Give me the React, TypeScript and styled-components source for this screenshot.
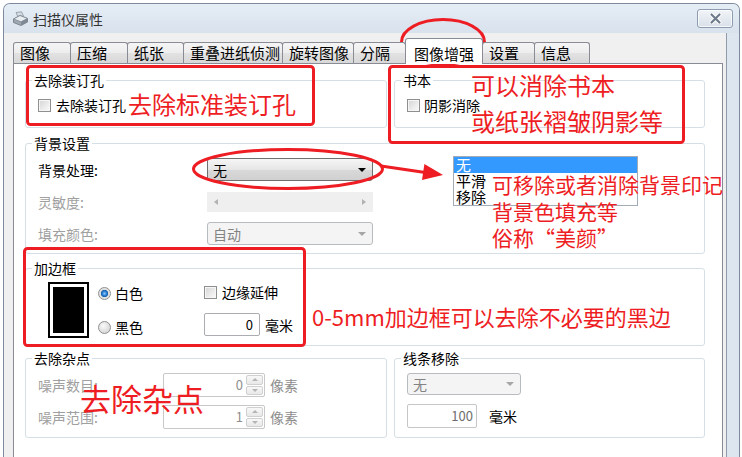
import React from 'react';
import styled, { createGlobalStyle } from 'styled-components';

const RED = '#ee1d23';
const FONT = '"Noto Sans CJK SC", "Noto Sans", sans-serif';

const tabs = [
  { label: '图像', w: 58 },
  { label: '压缩', w: 58 },
  { label: '纸张', w: 57 },
  { label: '重叠进纸侦测', w: 100 },
  { label: '旋转图像', w: 72 },
  { label: '分隔', w: 53 },
  { label: '图像增强', w: 78, active: true },
  { label: '设置', w: 53 },
  { label: '信息', w: 56 },
];

const Spinner = ({ value }: { value: string }) => (
  <SpinBox>
    <SpinValue>{value}</SpinValue>
    <SpinButtons>
      <SpinButton>
        <SpinArrow $up />
      </SpinButton>
      <SpinButton>
        <SpinArrow />
      </SpinButton>
    </SpinButtons>
  </SpinBox>
);

const App = () => (
  <>
    <GlobalStyle />
    <Page>
      <Window>
        <TitleBar>
          <svg width="17" height="16" viewBox="0 0 17 16">
            <path d="M4 1.5 L9.5 0.8 L11.5 5 L6 6 Z" fill="#d3dbe3" stroke="#8a949e" strokeWidth="0.8" />
            <path d="M1.5 8 L8 4.5 L15.5 7.5 L15.5 11 L9 14.5 L1.5 11.5 Z" fill="#9fa9b4" stroke="#6b7580" strokeWidth="0.8" />
            <path d="M1.5 8 L8 4.5 L15.5 7.5 L9 10.8 Z" fill="#e8edf2" stroke="#7d8791" strokeWidth="0.8" />
            <path d="M9 10.8 L15.5 7.5 L15.5 11 L9 14.5 Z" fill="#7f8a96" />
          </svg>
          <Title>扫描仪属性</Title>
          <CloseButton>
            <svg width="13" height="11" viewBox="0 0 13 11">
              <path d="M2.5 1.5 L10.5 9.5 M10.5 1.5 L2.5 9.5" stroke="#ffffff" strokeWidth="4" strokeLinecap="round" />
              <path d="M2.5 1.5 L10.5 9.5 M10.5 1.5 L2.5 9.5" stroke="#6f7b8b" strokeWidth="2.2" strokeLinecap="round" />
            </svg>
          </CloseButton>
        </TitleBar>
        <Client>
          <TabStrip>
            {tabs.map(t => (
              <Tab key={t.label} $w={t.w} $active={t.active}>
                {t.label}
              </Tab>
            ))}
          </TabStrip>
          <Panel>
            <Row>
              <Group $h={56}>
                <Legend>去除装订孔</Legend>
                <CheckRow $pt={6}>
                  <CheckBox />
                  <Label $gap={5}>去除装订孔</Label>
                </CheckRow>
              </Group>
              <Group $h={56}>
                <Legend>书本</Legend>
                <CheckRow $pt={6}>
                  <CheckBox />
                  <Label $gap={4}>阴影消除</Label>
                </CheckRow>
              </Group>
            </Row>

            <Group $h={119} $mt={7}>
              <Legend>背景设置</Legend>
              <FieldGrid $cols="169px 166px" $rowH={23} $rowGap={9}>
                <FieldLabel>背景处理:</FieldLabel>
                <Combo>
                  <span>无</span>
                  <DropArrow />
                </Combo>
                <FieldLabel $dim>灵敏度:</FieldLabel>
                <Track>
                  <TrackArrow $dir="left" />
                  <TrackArrow $dir="right" />
                </Track>
                <FieldLabel $dim>填充颜色:</FieldLabel>
                <Combo $disabled>
                  <span>自动</span>
                  <DropArrow $disabled />
                </Combo>
              </FieldGrid>
            </Group>

            <Group $h={86} $mt={6}>
              <Legend>加边框</Legend>
              <BorderRow>
                <FramePreview />
                <RadioCol>
                  <RadioRow>
                    <Radio $checked />
                    <Label $gap={4}>白色</Label>
                  </RadioRow>
                  <RadioRow>
                    <Radio />
                    <Label $gap={4}>黑色</Label>
                  </RadioRow>
                </RadioCol>
                <OptionCol>
                  <CheckRow $pt={0}>
                    <CheckBox />
                    <Label $gap={5}>边缘延伸</Label>
                  </CheckRow>
                  <InlineRow>
                    <NumberBox $w={56} $h={23}>
                      0
                    </NumberBox>
                    <Unit $gap={5}>毫米</Unit>
                  </InlineRow>
                </OptionCol>
              </BorderRow>
            </Group>

            <Row $mt={4}>
              <Group $h={88}>
                <Legend>去除杂点</Legend>
                <FieldGrid $cols="125px 102px auto" $rowH={24} $rowGap={8}>
                  <FieldLabel $dim>噪声数目:</FieldLabel>
                  <Spinner value="0" />
                  <Unit $dim $gap={5}>
                    像素
                  </Unit>
                  <FieldLabel $dim>噪声范围:</FieldLabel>
                  <Spinner value="1" />
                  <Unit $dim $gap={5}>
                    像素
                  </Unit>
                </FieldGrid>
              </Group>
              <Group $h={88}>
                <Legend>线条移除</Legend>
                <Stack>
                  <Combo $disabled $w={114} $h={22}>
                    <span>无</span>
                    <DropArrow $disabled />
                  </Combo>
                  <InlineRow>
                    <NumberBox $w={70} $h={24} $dim>
                      100
                    </NumberBox>
                    <Unit $gap={12}>毫米</Unit>
                  </InlineRow>
                </Stack>
              </Group>
            </Row>
          </Panel>
        </Client>
      </Window>

      {/* red markup drawn over the screenshot */}
      <PopupList>
        <PopupItem $selected>无</PopupItem>
        <PopupItem>平滑</PopupItem>
        <PopupItem>移除</PopupItem>
      </PopupList>
      <Marks width="742" height="457" viewBox="0 0 742 457">
        <rect x="27.5" y="66.5" width="286" height="58" rx="3" />
        <rect x="389.5" y="66.5" width="294" height="76" rx="3" />
        <rect x="24.5" y="248.5" width="280" height="97" rx="3" />
        <ellipse cx="443" cy="42" rx="41.5" ry="22.5" />
        <ellipse cx="288" cy="169" rx="94.5" ry="19.5" />
        <line x1="381" y1="166" x2="427" y2="172.8" />
        <polygon points="424.4,164.1 443,175 422,180" fill={RED} stroke="none" />
      </Marks>
      <MarkText $x={128} $y={90} $size={24} $lh={28}>
        去除标准装订孔
      </MarkText>
      <MarkText $x={471} $y={67} $size={24} $lh={36}>
        可以消除书本
        <br />
        或纸张褶皱阴影等
      </MarkText>
      <MarkText $x={492} $y={171} $size={21} $lh={26.5}>
        可移除或者消除背景印记
        <br />
        背景色填充等
        <br />
        俗称“美颜”
      </MarkText>
      <MarkText $x={312} $y={303} $size={22} $lh={26}>
        0-5mm加边框可以去除不必要的黑边
      </MarkText>
      <MarkText $x={80} $y={380} $size={31} $lh={36}>
        去除杂点
      </MarkText>
    </Page>
  </>
);

export default App;

const GlobalStyle = createGlobalStyle`
  html, body {
    margin: 0;
    padding: 0;
    background: #ffffff;
  }
  body {
    font-family: ${FONT};
    font-size: 14px;
    color: #000000;
  }
`;

const Page = styled.div`
  position: relative;
  width: 742px;
  height: 457px;
  overflow: hidden;
  box-sizing: border-box;
  padding: 3px 0 0 3px;
  background: #ffffff;
`;

const Window = styled.div`
  display: flex;
  flex-direction: column;
  box-sizing: border-box;
  width: 737px;
  height: 460px;
  border: 1px solid #7d8b9d;
  border-bottom: none;
  border-radius: 7px 7px 0 0;
  background: #dde5ee;
`;

const TitleBar = styled.div`
  display: flex;
  align-items: center;
  flex: none;
  height: 29px;
  padding: 0 6px 0 8px;
  border-radius: 6px 6px 0 0;
  background: linear-gradient(#e6edf5, #d8e2ed);
`;

const Title = styled.span`
  margin-left: 4px;
  font-size: 14px;
  line-height: 18px;
  color: #333333;
`;

const CloseButton = styled.div`
  display: flex;
  align-items: center;
  justify-content: center;
  box-sizing: border-box;
  width: 36px;
  height: 19px;
  margin-left: auto;
  border: 1px solid #8e9cb0;
  border-radius: 3px;
  background: linear-gradient(#f1f4f8, #d9e0e9);
  box-shadow: inset 0 0 0 1px rgba(255, 255, 255, 0.7);
`;

const Client = styled.div`
  display: flex;
  flex-direction: column;
  flex: 1;
  margin-right: 12px;
  padding: 5px 3px 0 9px;
  border-right: 1px solid #8f9bab;
  background: #f0f0f0;
`;

const TabStrip = styled.div`
  display: flex;
  align-items: flex-end;
  flex: none;
  height: 25px;
`;

const Tab = styled.div<{ $w: number; $active?: boolean }>`
  position: relative;
  z-index: ${p => (p.$active ? 2 : 1)};
  box-sizing: border-box;
  width: ${p => p.$w}px;
  height: ${p => (p.$active ? 26 : 21)}px;
  margin-bottom: ${p => (p.$active ? -1 : 0)}px;
  padding: ${p => (p.$active ? '5px 0 0 8px' : '0 0 0 6px')};
  border: 1px solid #898c95;
  border-bottom: none;
  border-radius: 3px 3px 0 0;
  background: ${p =>
    p.$active ? '#ffffff' : 'linear-gradient(#f5f5f5, #ededed 50%, #e2e2e2 51%, #d8d8d8)'};
  font-size: 15px;
  line-height: 20px;
  white-space: nowrap;

  & + & {
    margin-left: -1px;
  }
`;

const Panel = styled.div`
  display: flex;
  flex-direction: column;
  flex: 1;
  padding: 8px 17px 0 11px;
  border: 1px solid #898c95;
  background: #ffffff;
`;

const Row = styled.div<{ $mt?: number }>`
  display: grid;
  grid-template-columns: 362px 311px;
  column-gap: 7px;
  margin-top: ${p => p.$mt ?? 0}px;
`;

const Group = styled.fieldset<{ $h: number; $mt?: number }>`
  box-sizing: border-box;
  height: ${p => p.$h}px;
  min-width: 0;
  margin: ${p => p.$mt ?? 0}px 0 0 0;
  padding: 0 8px 0 12px;
  border: 1px solid #d5dfe5;
  border-radius: 3px;
`;

const Legend = styled.legend`
  margin-left: -6px;
  padding: 0 2px;
  font-size: 14px;
  line-height: 17px;
  color: #000000;
`;

const CheckRow = styled.div<{ $pt: number }>`
  display: flex;
  align-items: center;
  height: 20px;
  padding-top: ${p => p.$pt}px;
`;

const CheckBox = styled.span`
  flex: none;
  box-sizing: border-box;
  width: 13px;
  height: 13px;
  border: 1px solid #8e8f8f;
  background: linear-gradient(135deg, #d4d4d4 0%, #ececec 60%, #fbfbfb 100%);
  box-shadow: inset 0 0 0 1px #f6f6f6;
`;

const Label = styled.span<{ $gap?: number; $dim?: boolean }>`
  margin-left: ${p => p.$gap ?? 0}px;
  font-size: 14px;
  line-height: 18px;
  color: ${p => (p.$dim ? '#a0a0a0' : '#000000')};
  white-space: nowrap;
`;

const FieldGrid = styled.div<{ $cols: string; $rowH: number; $rowGap: number }>`
  display: grid;
  grid-template-columns: ${p => p.$cols};
  grid-auto-rows: ${p => p.$rowH}px;
  row-gap: ${p => p.$rowGap}px;
  align-items: center;
  justify-content: start;
  padding-top: 6px;
`;

const FieldLabel = styled.span<{ $dim?: boolean }>`
  font-size: 14px;
  line-height: 18px;
  color: ${p => (p.$dim ? '#a0a0a0' : '#000000')};
  white-space: nowrap;
`;

const Combo = styled.div<{ $disabled?: boolean; $w?: number; $h?: number }>`
  display: flex;
  align-items: center;
  justify-content: space-between;
  box-sizing: border-box;
  width: ${p => p.$w ?? 166}px;
  height: ${p => p.$h ?? 23}px;
  padding: 0 6px 0 5px;
  border: 1px solid ${p => (p.$disabled ? '#b8bcc0' : '#707070')};
  border-radius: 3px;
  background: ${p =>
    p.$disabled ? '#f4f4f4' : 'linear-gradient(#f6f6f6, #e6e6e6 50%, #d9d9d9 51%, #d0d0d0)'};
  color: ${p => (p.$disabled ? '#838383' : '#000000')};
  font-size: 14px;
  line-height: 18px;
`;

const DropArrow = styled.span<{ $disabled?: boolean }>`
  width: 0;
  height: 0;
  border-left: 4px solid transparent;
  border-right: 4px solid transparent;
  border-top: 4px solid ${p => (p.$disabled ? '#a6a6a6' : '#000000')};
`;

const Track = styled.div`
  display: flex;
  align-items: center;
  justify-content: space-between;
  box-sizing: border-box;
  width: 166px;
  height: 20px;
  padding: 0 7px;
  background: #efefef;
`;

const TrackArrow = styled.span<{ $dir: 'left' | 'right' }>`
  width: 0;
  height: 0;
  border-top: 3.5px solid transparent;
  border-bottom: 3.5px solid transparent;
  ${p =>
    p.$dir === 'left' ? 'border-right: 4px solid #b2b2b2;' : 'border-left: 4px solid #b2b2b2;'}
`;

const BorderRow = styled.div`
  display: flex;
  align-items: flex-start;
  padding-top: 5px;
`;

const FramePreview = styled.div`
  flex: none;
  box-sizing: border-box;
  width: 41px;
  height: 56px;
  margin-left: 10px;
  padding: 3px;
  border: 2px solid #000000;
  background: linear-gradient(#000000, #000000) content-box, #ffffff;
`;

const RadioCol = styled.div`
  display: flex;
  flex-direction: column;
  gap: 12px;
  width: 106px;
  margin-left: 9px;
`;

const RadioRow = styled.div`
  display: flex;
  align-items: center;
  height: 22px;
`;

const Radio = styled.span<{ $checked?: boolean }>`
  flex: none;
  box-sizing: border-box;
  width: 13px;
  height: 13px;
  border: 1px solid #8e8f8f;
  border-radius: 50%;
  background: ${p =>
    p.$checked
      ? 'radial-gradient(circle at 50% 50%, #8cc8f5 0, #2a7ed4 2.2px, #1b5fa8 3.4px, #dcdcdc 3.9px, #f4f4f4 100%)'
      : 'radial-gradient(circle at 40% 35%, #fafafa 0, #e2e2e2 5px, #d2d2d2 100%)'};
`;

const OptionCol = styled.div`
  display: flex;
  flex-direction: column;
  gap: 11px;
`;

const InlineRow = styled.div`
  display: flex;
  align-items: center;
`;

const NumberBox = styled.div<{ $w: number; $h: number; $dim?: boolean }>`
  box-sizing: border-box;
  width: ${p => p.$w}px;
  height: ${p => p.$h}px;
  padding-right: ${p => (p.$dim ? 3 : 6)}px;
  border: 1px solid ${p => (p.$dim ? '#c6c6c6' : '#abadb3')};
  border-radius: 2px;
  background: #ffffff;
  text-align: right;
  font-size: 13px;
  line-height: ${p => p.$h - 2}px;
  color: ${p => (p.$dim ? '#6d6d6d' : '#000000')};
`;

const Unit = styled.span<{ $gap: number; $dim?: boolean }>`
  margin-left: ${p => p.$gap}px;
  font-size: 14px;
  line-height: 18px;
  color: ${p => (p.$dim ? '#8d8d8d' : '#000000')};
  white-space: nowrap;
`;

const SpinBox = styled.div`
  display: flex;
  box-sizing: border-box;
  width: 102px;
  height: 24px;
  padding: 1px;
  border: 1px solid #c8c8c8;
  border-radius: 2px;
  background: #ffffff;
`;

const SpinValue = styled.span`
  flex: 1;
  padding-right: 3px;
  text-align: right;
  font-size: 13px;
  line-height: 20px;
  color: #8e8e8e;
`;

const SpinButtons = styled.div`
  display: flex;
  flex-direction: column;
  gap: 1px;
  width: 17px;
`;

const SpinButton = styled.div`
  display: flex;
  align-items: center;
  justify-content: center;
  flex: 1;
  border: 1px solid #d0d0d0;
  border-radius: 2px;
  background: linear-gradient(#f8f8f8, #e8e8e8);
`;

const SpinArrow = styled.span<{ $up?: boolean }>`
  width: 0;
  height: 0;
  border-left: 3px solid transparent;
  border-right: 3px solid transparent;
  ${p => (p.$up ? 'border-bottom: 3px solid #b4b4b4;' : 'border-top: 3px solid #b4b4b4;')}
`;

const Stack = styled.div`
  display: flex;
  flex-direction: column;
  align-items: flex-start;
  gap: 9px;
  padding-top: 6px;
`;

const PopupList = styled.div`
  position: absolute;
  left: 453px;
  top: 156px;
  box-sizing: border-box;
  width: 185px;
  height: 50px;
  border: 1px solid #a2abb6;
  background: #ffffff;
`;

const PopupItem = styled.div<{ $selected?: boolean }>`
  height: 16px;
  padding-left: 2px;
  font-size: 15px;
  line-height: 16px;
  color: ${p => (p.$selected ? '#ffffff' : '#000000')};
  background: ${p => (p.$selected ? '#3399ff' : 'transparent')};
`;

const Marks = styled.svg`
  position: absolute;
  left: 0;
  top: 0;
  pointer-events: none;
  fill: none;
  stroke: ${RED};
  stroke-width: 3;
`;

const MarkText = styled.div<{ $x: number; $y: number; $size: number; $lh: number }>`
  position: absolute;
  left: ${p => p.$x}px;
  top: ${p => p.$y}px;
  font-size: ${p => p.$size}px;
  line-height: ${p => p.$lh}px;
  color: ${RED};
  white-space: nowrap;
  pointer-events: none;
`;
